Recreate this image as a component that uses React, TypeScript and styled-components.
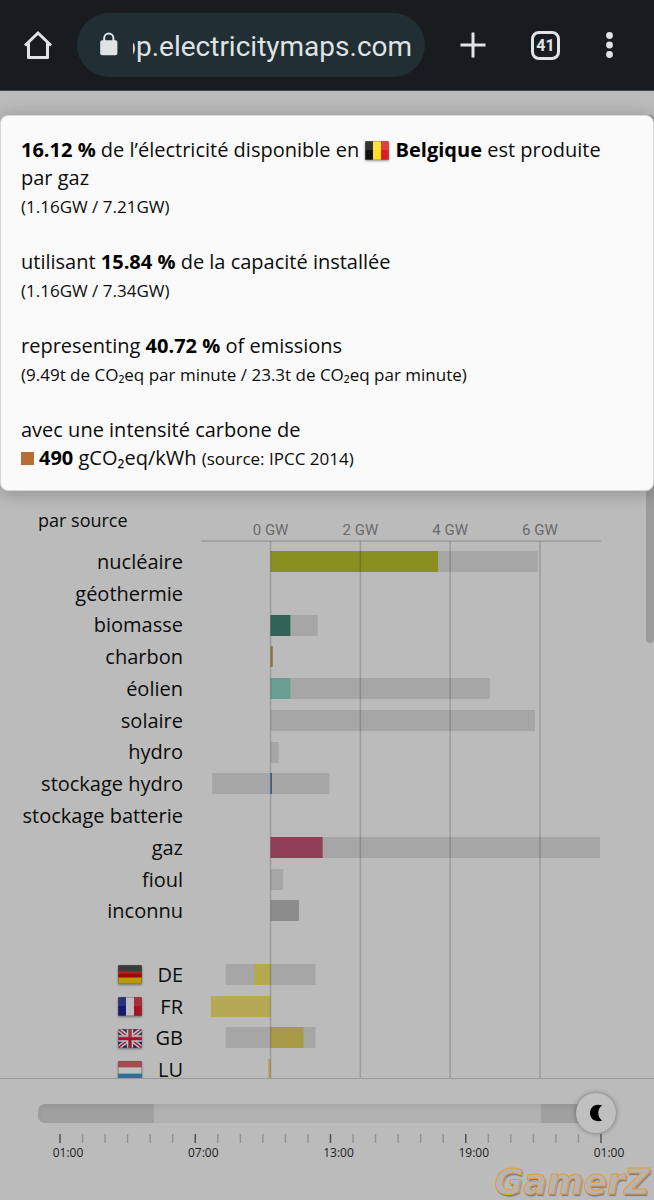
import React, { useLayoutEffect, useRef, useState } from 'react';
import styled, { createGlobalStyle } from 'styled-components';

const GlobalStyle = createGlobalStyle`
  * { box-sizing: border-box; }
  body {
    margin: 0;
    background: #bbbbbb;
    color: #0c0c0c;
    font-family: 'Open Sans', 'Noto Sans', sans-serif;
  }
`;

/* ---------- data ---------- */

type Country = 'BE' | 'DE' | 'FR' | 'GB' | 'LU';

interface Entry {
  label: string;
  flag?: Country;
  capacity?: [number, number];
  value?: number;
  color?: string;
}

const SOURCES: Entry[] = [
  { label: 'nucléaire', capacity: [0, 5.95], value: 3.73, color: '#8a9020' },
  { label: 'géothermie' },
  { label: 'biomasse', capacity: [0, 1.05], value: 0.44, color: '#2f6355' },
  { label: 'charbon', value: 0.05, color: '#94794a' },
  { label: 'éolien', capacity: [0, 4.88], value: 0.44, color: '#689f90' },
  { label: 'solaire', capacity: [0, 5.89] },
  { label: 'hydro', capacity: [0, 0.18] },
  { label: 'stockage hydro', capacity: [-1.3, 1.31], value: 0.03, color: '#365b96' },
  { label: 'stockage batterie' },
  { label: 'gaz', capacity: [0, 7.34], value: 1.16, color: '#913f55' },
  { label: 'fioul', capacity: [0, 0.28] },
  { label: 'inconnu', value: 0.63, color: '#8c8c8c' },
];

const EXCHANGES: Entry[] = [
  { label: 'DE', flag: 'DE', capacity: [-1, 1], value: -0.37, color: '#b5a94f' },
  { label: 'FR', flag: 'FR', value: -1.33, color: '#b5a955' },
  { label: 'GB', flag: 'GB', capacity: [-1, 1], value: 0.73, color: '#a99a47' },
  { label: 'LU', flag: 'LU', value: -0.05, color: '#b5a24f' },
];

const ROWS: (Entry | null)[] = [...SOURCES, null, ...EXCHANGES];
const HEADER_HEIGHT = 45;
const BODY_HEIGHT = 540;
const DOMAIN: [number, number] = [-1.55, 7.36];

const toPercent = (gw: number) => ((gw - DOMAIN[0]) / (DOMAIN[1] - DOMAIN[0])) * 100;

/* ---------- browser bar ---------- */

const Screen = styled.div`
  display: flex;
  flex-direction: column;
  height: 100vh;
  min-height: 720px;
  position: relative;
  overflow: hidden;
`;

const BrowserBar = styled.header`
  flex: none;
  display: flex;
  align-items: center;
  height: 91px;
  padding: 0 41px 0 23px;
  background: #181c1f;
  border-bottom: 1px solid #434849;
`;

const BarButton = styled.button<{ $width: number }>`
  flex: none;
  width: ${(p) => p.$width}px;
  height: 30px;
  padding: 0;
  border: 0;
  background: none;
  color: #e1e4e6;
  cursor: pointer;

  svg {
    display: block;
    overflow: visible;
  }
`;

const TabsButton = styled(BarButton)`
  height: 29px;
  border: 3px solid #e1e4e6;
  border-radius: 8px;
  font: 700 16px/23px Roboto, sans-serif;
`;

const AddressPill = styled.label`
  flex: 1;
  min-width: 0;
  display: flex;
  align-items: center;
  gap: 15px;
  height: 64px;
  margin: 0 36px 0 24px;
  padding: 0 13px 0 23px;
  border-radius: 32px;
  background: #212e33;
  color: #dfe3e5;

  svg {
    flex: none;
    margin-bottom: 2px;
  }
`;

const AddressInput = styled.input`
  flex: 1;
  min-width: 0;
  height: 48px;
  padding: 2px 0 0;
  border: 0;
  outline: 0;
  background: none;
  color: #dfe3e5;
  font: 400 28px/46px Roboto, sans-serif;
`;

const BarActions = styled.div`
  display: flex;
  align-items: center;
  gap: 46px;
`;

function AddressField() {
  const ref = useRef<HTMLInputElement>(null);
  useLayoutEffect(() => {
    if (ref.current) ref.current.scrollLeft = ref.current.scrollWidth;
  }, []);
  return (
    <AddressPill>
      <svg width="18" height="24" viewBox="0 0 18 24" aria-hidden="true">
        <path d="M4.2 9.5V6.2a4.6 4.6 0 0 1 9.2 0v3.3" fill="none" stroke="currentColor" strokeWidth="2" />
        <rect x="0.2" y="8.2" width="17.2" height="15" rx="2" fill="currentColor" />
      </svg>
      <AddressInput ref={ref} type="text" aria-label="Adresse" defaultValue="app.electricitymaps.com" />
    </AddressPill>
  );
}

/* ---------- tooltip ---------- */

const Page = styled.main`
  flex: 1;
  min-height: 0;
  position: relative;
  overflow: hidden;
  padding-top: 24px;
`;

const Tooltip = styled.section`
  position: relative;
  z-index: 2;
  display: flex;
  flex-direction: column;
  gap: 28px;
  padding: 20px 20px 18px;
  border: 1px solid #d6d6d6;
  border-radius: 8px;
  background: #fafafa;
  box-shadow: 0 2px 18px rgba(0, 0, 0, 0.25);
`;

const Fact = styled.p`
  margin: 0;
  font-size: 20px;
  line-height: 28px;

  b {
    color: #000;
  }
`;

const Detail = styled.small`
  font-size: 17px;
  line-height: 20px;
`;

const Swatch = styled.span`
  display: inline-block;
  width: 13px;
  height: 13px;
  margin-right: 5px;
  background: #b56f36;
`;

const FlagSvg = styled.svg<{ $inline?: boolean; $dim?: boolean }>`
  flex: none;
  margin: ${(p) => (p.$inline ? '0 1px' : '0')};
  vertical-align: ${(p) => (p.$inline ? '-3px' : 'baseline')};
  filter: ${(p) => (p.$dim ? 'brightness(0.75) ' : '')}drop-shadow(0 1px 1px rgba(0, 0, 0, 0.4));
`;

function FlagDrawing({ code }: { code: Country }) {
  switch (code) {
    case 'BE':
      return (
        <>
          <rect width="8" height="19" fill="#111" />
          <rect x="8" width="8" height="19" fill="#fbdf1c" />
          <rect x="16" width="8" height="19" fill="#e01b22" />
        </>
      );
    case 'DE':
      return (
        <>
          <rect width="24" height="7" fill="#333" />
          <rect y="6" width="24" height="7" fill="#d50a0a" />
          <rect y="12.5" width="24" height="6.5" fill="#f5cf05" />
        </>
      );
    case 'FR':
      return (
        <>
          <rect width="8" height="19" fill="#1a2393" />
          <rect x="8" width="8" height="19" fill="#fff" />
          <rect x="16" width="8" height="19" fill="#dc1c30" />
        </>
      );
    case 'GB':
      return (
        <>
          <rect width="24" height="19" fill="#26277c" />
          <path d="M0 0 24 19M24 0 0 19" stroke="#fff" strokeWidth="4.5" />
          <path d="M0 0 24 19M24 0 0 19" stroke="#d5203a" strokeWidth="1.4" />
          <path d="M12 0v19M0 9.5h24" stroke="#fff" strokeWidth="6.4" />
          <path d="M12 0v19M0 9.5h24" stroke="#d5203a" strokeWidth="3.4" />
        </>
      );
    default:
      return (
        <>
          <rect width="24" height="7" fill="#dc4a4f" />
          <rect y="6.4" width="24" height="6.6" fill="#fff" />
          <rect y="12.6" width="24" height="6.4" fill="#3e93c9" />
        </>
      );
  }
}

function Flag({ code, inline, dim }: { code: Country; inline?: boolean; dim?: boolean }) {
  const clip = `flag-${code}`;
  return (
    <FlagSvg $inline={inline} $dim={dim} width="24" height="19" viewBox="0 0 24 19" aria-hidden="true">
      <clipPath id={clip}>
        <rect width="24" height="19" rx="1.5" />
      </clipPath>
      <g clipPath={`url(#${clip})`}>
        <FlagDrawing code={code} />
        <rect width="24" height="9" fill="#fff" opacity="0.14" />
        <rect x="0.5" y="0.5" width="23" height="18" rx="1" fill="none" stroke="#777" strokeOpacity="0.4" />
      </g>
    </FlagSvg>
  );
}

/* ---------- chart ---------- */

const Chart = styled.section`
  display: grid;
  grid-template-columns: 183px minmax(0, 1fr);
  grid-template-rows: ${HEADER_HEIGHT}px ${BODY_HEIGHT}px;
  column-gap: 18px;
  margin-top: 10px;
  padding-right: 53px;
`;

const ChartTitle = styled.h2`
  margin: 0;
  padding: 7px 0 0 38px;
  font-size: 18px;
  line-height: 24px;
  font-weight: 400;
`;

const Labels = styled.ul`
  grid-row: 2;
  display: grid;
  grid-template-rows: repeat(${ROWS.length}, 1fr);
  margin: 0;
  padding: 0;
  list-style: none;
  text-align: right;
  white-space: nowrap;
  font-size: 20px;
  line-height: 30px;
`;

const LabelRow = styled.li`
  display: flex;
  justify-content: flex-end;
  align-items: center;
`;

const CountryCode = styled.span`
  width: 41px;
`;

const Plot = styled.svg`
  grid-column: 2;
  grid-row: 1 / span 2;
  width: 100%;
  height: 100%;
  overflow: visible;

  text {
    fill: #6a6a6a;
    font: 400 15px Roboto, sans-serif;
    text-anchor: middle;
  }
`;

function Bar({ row, from, to, fill }: { row: number; from: number; to: number; fill: string }) {
  const pitch = BODY_HEIGHT / ROWS.length;
  const start = toPercent(Math.min(from, to));
  const end = toPercent(Math.max(from, to));
  return (
    <rect
      x={`${start}%`}
      width={`${end - start}%`}
      y={Math.round(HEADER_HEIGHT + row * pitch + 5)}
      height="21"
      fill={fill}
    />
  );
}

function SourceChart() {
  return (
    <Chart>
      <ChartTitle>par source</ChartTitle>
      <Labels>
        {ROWS.map((row, i) => (
          <LabelRow key={i} aria-hidden={row ? undefined : true}>
            {row?.flag && <Flag code={row.flag} dim />}
            {row && (row.flag ? <CountryCode>{row.label}</CountryCode> : row.label)}
          </LabelRow>
        ))}
      </Labels>
      <Plot role="img" aria-label="Production et capacité par source">
        {ROWS.map(
          (row, i) =>
            row && (
              <g key={i}>
                {row.capacity && <Bar row={i} from={row.capacity[0]} to={row.capacity[1]} fill="#a6a6a6" />}
                {row.value !== undefined && <Bar row={i} from={0} to={row.value} fill={row.color ?? '#8c8c8c'} />}
              </g>
            ),
        )}
        <line x1="0" x2="100%" y1="40" y2="40" stroke="#9c9c9c" strokeWidth="1.5" />
        {[0, 2, 4, 6].map((gw) => (
          <g key={gw}>
            <line
              x1={`${toPercent(gw)}%`}
              x2={`${toPercent(gw)}%`}
              y1="40"
              y2="100%"
              stroke="#000"
              strokeOpacity="0.16"
              strokeWidth="1.6"
            />
            <text x={`${toPercent(gw)}%`} y="34">
              {gw} GW
            </text>
          </g>
        ))}
      </Plot>
    </Chart>
  );
}

const ScrollThumb = styled.div`
  position: absolute;
  top: 24px;
  right: 0;
  width: 8px;
  height: 528px;
  border-radius: 4px;
  background: #9b9b9b;
`;

/* ---------- time slider ---------- */

const TimeBar = styled.footer`
  flex: none;
  height: 122px;
  padding: 14px 38px 0;
  border-top: 1px solid #999;
`;

const SliderBox = styled.div`
  position: relative;
  height: 40px;
`;

const Slider = styled.input`
  appearance: none;
  display: block;
  width: 100%;
  height: 40px;
  margin: 0;
  background: none;
  cursor: pointer;

  &::-webkit-slider-runnable-track {
    height: 19px;
    border-radius: 7px;
    background: linear-gradient(
      to right,
      #a0a0a0 20%,
      #b1b1b1 20%,
      #b1b1b1 87%,
      #a0a0a0 87%
    );
    box-shadow: inset 0 3px 5px rgba(0, 0, 0, 0.06);
  }

  &::-webkit-slider-thumb {
    appearance: none;
    width: 40px;
    height: 40px;
    margin-top: -11px;
    border-radius: 50%;
    background: #c0c0c0;
    box-shadow: 0 0 5px rgba(0, 0, 0, 0.4);
  }
`;

const Moon = styled.svg`
  position: absolute;
  top: 10px;
  pointer-events: none;
`;

const TimeAxis = styled.div`
  padding: 0 15px 0 22px;

  svg {
    display: block;
    overflow: visible;
  }

  text {
    fill: #1c1c1c;
    font: 400 12px 'Open Sans', sans-serif;
    text-anchor: middle;
  }
`;

const Watermark = styled.div`
  position: absolute;
  right: 4px;
  bottom: -3px;
  font: italic 700 35px/42px 'DejaVu Sans', sans-serif;
  color: #b5b5b5;
  -webkit-text-stroke: 1px #e39a3c;
  text-shadow: 1px 2px 1px rgba(70, 80, 95, 0.6);
`;

const HOURS = ['01:00', '07:00', '13:00', '19:00', '01:00'];

function TimeControl() {
  const [hour, setHour] = useState(24);
  return (
    <TimeBar>
      <SliderBox>
        <Slider
          type="range"
          min={0}
          max={24}
          value={hour}
          aria-label="Heure"
          onChange={(e) => setHour(Number(e.target.value))}
        />
        <Moon
          width="20"
          height="20"
          viewBox="0 0 20 20"
          aria-hidden="true"
          style={{ left: `calc((100% - 40px) * ${hour / 24} + 10px)` }}
        >
          <path d="M16.2 2.6C10 0 4 3.900 4 10s6 10 12.200 7.400C11 14.800 11 5.200 16.200 2.600Z" fill="#000" />
        </Moon>
      </SliderBox>
      <TimeAxis>
        <svg width="100%" height="40" role="img" aria-label="Dernières 24 heures">
          {Array.from({ length: 25 }, (_, i) => (
            <line
              key={i}
              x1={`${(i / 24) * 100}%`}
              x2={`${(i / 24) * 100}%`}
              y1="1"
              y2="10"
              stroke={i % 6 ? '#939393' : '#4c4c4c'}
              strokeWidth="1.4"
            />
          ))}
          {HOURS.map((label, i) => (
            <text key={i} x={`${i * 25}%`} dx="8" y="24">
              {label}
            </text>
          ))}
        </svg>
      </TimeAxis>
    </TimeBar>
  );
}

export default function App() {
  return (
    <Screen>
      <GlobalStyle />
      <BrowserBar>
        <BarButton $width={30} aria-label="Accueil">
          <svg width="30" height="30" viewBox="0 0 30 30" fill="none" stroke="currentColor" strokeWidth="3">
            <path d="M2 15.500 15 3l13 12.500" />
            <path d="M5.500 12.500v15h19v-15" strokeLinejoin="round" />
          </svg>
        </BarButton>
        <AddressField />
        <BarActions>
          <BarButton $width={24} aria-label="Nouvel onglet">
            <svg width="24" height="30" viewBox="0 0 24 30" stroke="currentColor" strokeWidth="3">
              <path d="M-0.500 15h25M12 2.500v25" />
            </svg>
          </BarButton>
          <TabsButton $width={29} aria-label="41 onglets">
            41
          </TabsButton>
          <BarButton $width={7} aria-label="Menu">
            <svg width="7" height="30" viewBox="0 0 7 30" fill="currentColor">
              <circle cx="3.500" cy="5.500" r="3.400" />
              <circle cx="3.500" cy="15" r="3.400" />
              <circle cx="3.500" cy="24.500" r="3.400" />
            </svg>
          </BarButton>
        </BarActions>
      </BrowserBar>
      <Page>
        <Tooltip role="tooltip">
          <Fact>
            <b>16.12 %</b> de l’électricité disponible en <Flag code="BE" inline /> <b>Belgique</b> est produite par
            gaz
            <br />
            <Detail>(1.16GW / 7.21GW)</Detail>
          </Fact>
          <Fact>
            utilisant <b>15.84 %</b> de la capacité installée
            <br />
            <Detail>(1.16GW / 7.34GW)</Detail>
          </Fact>
          <Fact>
            representing <b>40.72 %</b> of emissions
            <br />
            <Detail>(9.49t de CO₂eq par minute / 23.3t de CO₂eq par minute)</Detail>
          </Fact>
          <Fact>
            avec une intensité carbone de
            <br />
            <Swatch />
            <b>490</b> gCO₂eq/kWh <Detail>(source: IPCC 2014)</Detail>
          </Fact>
        </Tooltip>
        <SourceChart />
        <ScrollThumb />
      </Page>
      <TimeControl />
      <Watermark>GamerZ</Watermark>
    </Screen>
  );
}
